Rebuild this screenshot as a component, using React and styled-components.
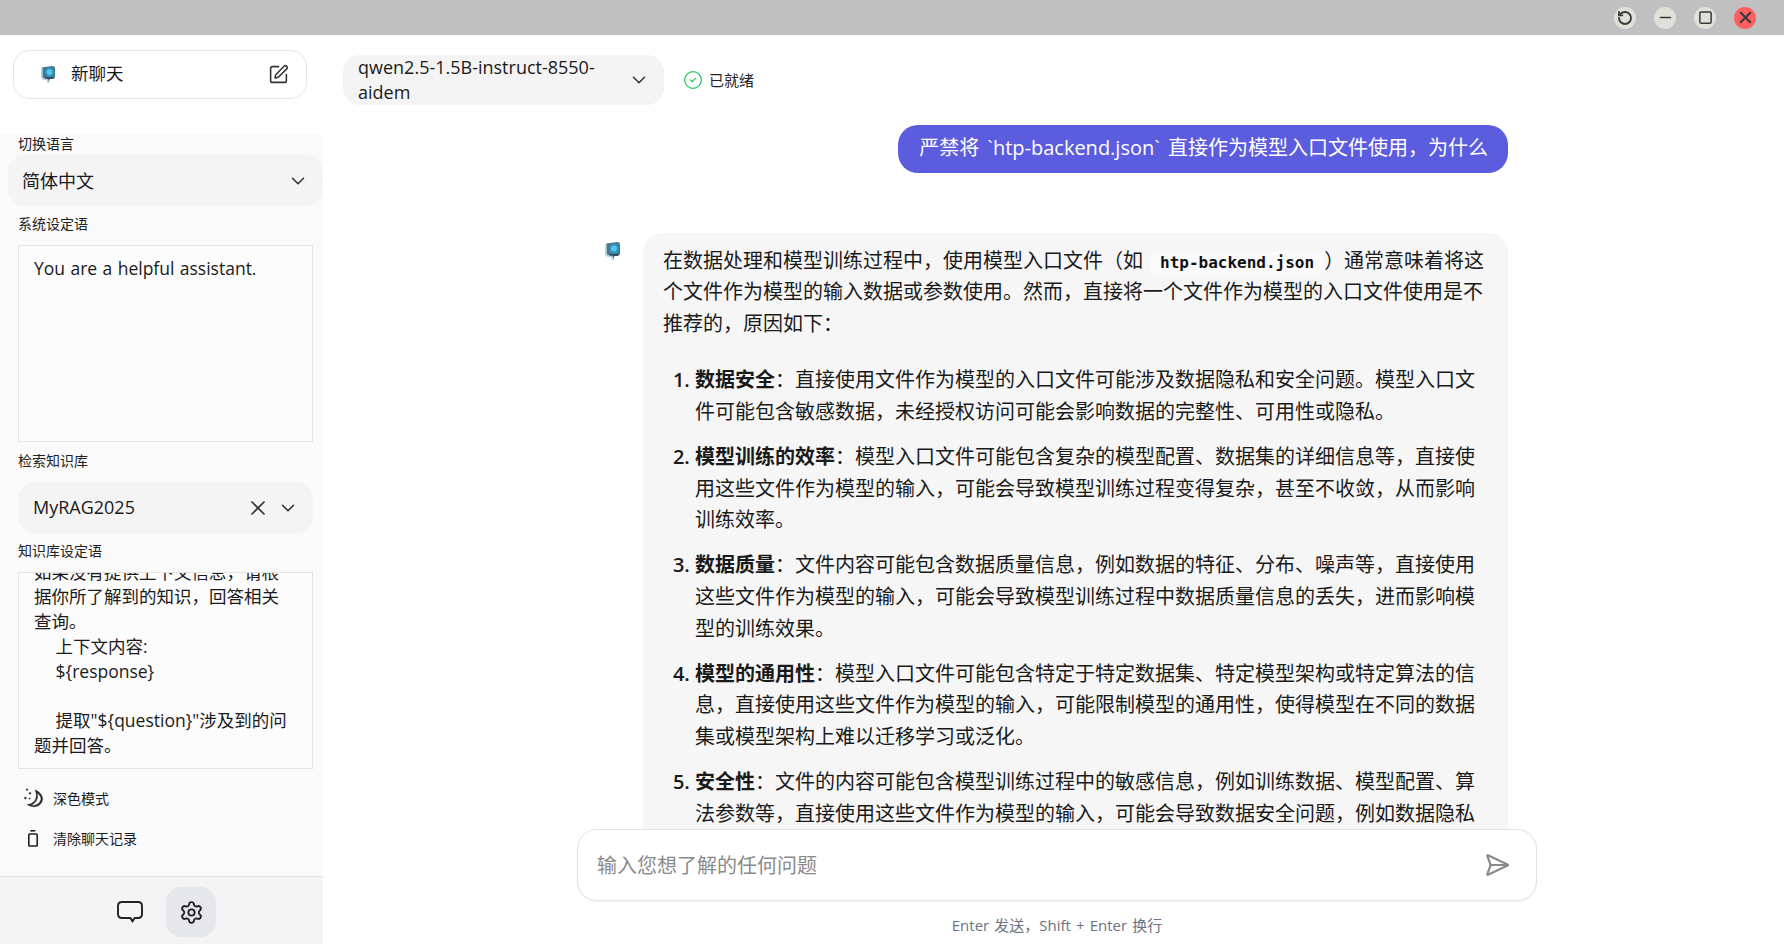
import React from "react";
import styled, { createGlobalStyle } from "styled-components";
import {
  ChevronDown,
  CircleCheck,
  Minus,
  RotateCcw,
  SendHorizontal,
  Settings,
  Square,
  SquarePen,
  X,
} from "lucide-react";

const FONT = `"Open Sans", "Noto Sans CJK SC", "Noto Sans", sans-serif`;

const GlobalStyle = createGlobalStyle`
  * { box-sizing: border-box; }
  html, body { margin: 0; padding: 0; height: 100%; overflow: hidden; background: #fff; }
  body { font-family: ${FONT}; color: #111; }
`;

const Page = styled.div`
  height: 100vh;
  display: flex;
  flex-direction: column;
`;

const TitleBar = styled.div`
  height: 35px;
  flex: none;
  background: #c0c0c0;
  display: flex;
  justify-content: flex-end;
  align-items: center;
  gap: 18px;
  padding: 0 28px 0 0;
`;

const WinButton = styled.div`
  width: 22px;
  height: 22px;
  border-radius: 50%;
  background: ${(p) => (p.$close ? "#ff5f5f" : "#dfe0da")};
  color: #3a3a3a;
  display: flex;
  align-items: center;
  justify-content: center;
`;

const Body = styled.div`
  flex: 1;
  min-height: 0;
  display: flex;
`;

const Sidebar = styled.aside`
  width: 323px;
  flex: none;
  background: #fafafa;
  display: flex;
  flex-direction: column;
`;

const SideTop = styled.div`
  height: 100px;
  flex: none;
  background: #fff;
  padding: 15px 16px 0 13px;
`;

const NewChat = styled.div`
  height: 49px;
  border: 1px solid #e5e5e5;
  border-radius: 16px;
  background: #fff;
  display: flex;
  align-items: center;
  padding: 0 17px 0 27px;
  font-size: 17.5px;
  color: #1a1a1a;
`;

const NewChatLabel = styled.span`
  flex: 1;
  margin-left: 15px;
  line-height: 1;
  position: relative;
  top: -1px;
`;

const SettingsPanel = styled.div`
  flex: 1;
  padding: 0 10px 0 18px;
  display: flex;
  flex-direction: column;
`;

const Label = styled.div`
  height: 20px;
  line-height: 18px;
  font-size: 14px;
  color: #222;
  margin-top: ${(p) => p.$top ?? 9}px;
`;

const Select = styled.div`
  height: 51px;
  flex: none;
  margin: ${(p) => (p.$wide ? "0 -10px 0 -10px" : "10px 0 0 0")};
  border-radius: 17px;
  background: #f4f4f4;
  display: flex;
  align-items: center;
  gap: 7px;
  padding: ${(p) => (p.$wide ? "0 14px 0 14px" : "0 14px 0 15px")};
  font-size: 18px;
  color: #1a1a1a;
`;

const SelectText = styled.span`
  flex: 1;
  padding-bottom: 2px;
`;

const TextBox = styled.div`
  height: 197px;
  flex: none;
  margin-top: 10px;
  border: 1px solid #e3e3e3;
  background: #fcfcfc;
  padding: 10px 25px 10px 15px;
  font-size: 17.5px;
  line-height: 24.8px;
  word-spacing: 0.85px;
  color: #1a1a1a;
  white-space: pre-wrap;
  overflow: hidden;
  display: flex;
  flex-direction: column;
  justify-content: ${(p) => (p.$bottom ? "flex-end" : "flex-start")};
`;

const Actions = styled.div`
  margin-top: 9px;
`;

const ActionRow = styled.div`
  height: 40px;
  display: flex;
  align-items: center;
  font-size: 14px;
  color: #1a1a1a;
  padding-left: 5px;
`;

const ActionIcon = styled.span`
  width: 30px;
  display: flex;
  align-items: center;
`;

const SideFooter = styled.div`
  height: 68px;
  flex: none;
  border-top: 1px solid #e2e2e2;
  background: #f4f4f4;
  display: flex;
  justify-content: center;
  align-items: center;
  gap: 11px;
  padding: 3px 2px 0 0;
  color: #222;
`;

const FooterButton = styled.div`
  width: 50px;
  height: 50px;
  border-radius: 15px;
  background: ${(p) => (p.$active ? "#e5e7eb" : "transparent")};
  display: flex;
  align-items: center;
  justify-content: center;
`;

const Main = styled.main`
  flex: 1;
  min-width: 0;
  display: flex;
  flex-direction: column;
  background: #fff;
`;

const ModelBar = styled.div`
  height: 90px;
  flex: none;
  padding: 20px 0 0 20px;
  display: flex;
  align-items: flex-start;
`;

const ModelSelect = styled.div`
  width: 321px;
  height: 50px;
  border-radius: 17px;
  background: #f4f4f4;
  display: flex;
  align-items: center;
  padding: 0 14px 0 15px;
  font-size: 18px;
  line-height: 25px;
  color: #1a1a1a;
`;

const ModelName = styled.span`
  flex: 1;
  padding-right: 16px;
`;

const Status = styled.div`
  height: 50px;
  margin-left: 19px;
  display: flex;
  align-items: center;
  gap: 6px;
  font-size: 15px;
  color: #222;
`;

const StatusText = styled.span`
  padding-bottom: 2px;
`;

const ChatArea = styled.div`
  height: 704px;
  flex: none;
  overflow: hidden;
  padding: 0 276px 0 282px;
  display: flex;
  flex-direction: column;
`;

const UserRow = styled.div`
  display: flex;
  justify-content: flex-end;
  margin-bottom: 60px;
`;

const UserBubble = styled.div`
  height: 48px;
  border-radius: 20px;
  background: #5c5cdf;
  color: #fff;
  font-size: 20px;
  line-height: 46px;
  word-spacing: 3px;
  padding: 0 20px 0 21px;
  white-space: nowrap;
`;

const AssistantRow = styled.div`
  display: flex;
  align-items: flex-start;
`;

const AvatarSlot = styled.div`
  width: 38px;
  flex: none;
  padding-top: 8px;
`;

const AssistantBubble = styled.div`
  width: 865px;
  flex: none;
  border-radius: 20px 20px 0 0;
  background: #f6f6f6;
  padding: 12px 20px 16px;
  font-size: 20px;
  line-height: 31.8px;
  color: #1a1a1a;
`;

const Para = styled.p`
  margin: 0 0 25px;
  line-height: 31.4px;
`;

const Code = styled.code`
  display: inline-block;
  height: 25px;
  line-height: 24px;
  margin: 0 0 0 6px;
  padding: 0 10px 0 11px;
  border-radius: 6px;
  background: #fafafa;
  font-family: "DejaVu Sans Mono", monospace;
  font-weight: 700;
  font-size: 16px;
  color: #111;
`;

const List = styled.ol`
  margin: 0;
  padding-left: 32px;
`;

const Item = styled.li`
  margin-bottom: 13px;
  &::marker {
    font-weight: 600;
  }
`;

const Composer = styled.div`
  flex: 1;
  min-height: 0;
  padding: 0 247px 0 254px;
`;

const InputBox = styled.div`
  height: 72px;
  border: 1px solid #e2e2e2;
  border-radius: 20px;
  background: #fff;
  box-shadow: 0 1px 2px rgba(0, 0, 0, 0.05);
  display: flex;
  align-items: center;
  justify-content: space-between;
  padding: 0 26px 0 19px;
  font-size: 20px;
  color: #8a8a8a;
`;

const Placeholder = styled.span`
  padding-bottom: 2px;
`;

const Hint = styled.div`
  margin-top: 14px;
  text-align: center;
  font-size: 15px;
  line-height: 20px;
  word-spacing: 1.2px;
  color: #6b7280;
`;

function Logo({ size = 16 }) {
  return (
    <svg width={size} height={size * 1.25} viewBox="0 0 16 20">
      <path d="M2 2.5 L12 1 Q15 1 15 4 V12 Q15 15 12 15 H9.5 L8 19 L6.5 15 H4 Q1 15 1 12 V4 Q1 2.5 2 2.5Z" fill="#4f6f82" />
      <path d="M1 3.5 V12 Q1 15 4 15 H6.5 L8 19" stroke="#a9d0e0" strokeWidth="1.8" fill="none" />
      <circle cx="9" cy="7.6" r="5.4" fill="#2c93bd" />
      <circle cx="9" cy="7.6" r="3" fill="#59c4e4" />
      <path d="M4.5 14 H13" stroke="#22343f" strokeWidth="1.2" />
    </svg>
  );
}

function MoonIcon() {
  return (
    <svg width="20" height="20" viewBox="0 0 20 20" fill="#222" stroke="#222" strokeWidth="0.5">
      <path d="M12.3 2 C17 4 20 8 19.5 11.5 C19 16 15 18.8 11 18.7 C8.5 18.6 6 18 4.3 16.5 C10 16.5 16 11 12.3 2Z M13.9 4.7 C16.3 10 12.3 15.9 7.6 17.2 C11.6 18.3 16.6 16.3 18 11.4 C18.3 9 16.6 6.4 13.9 4.7Z" fillRule="evenodd" />
      <circle cx="2.4" cy="10" r="0.9" />
      <circle cx="7" cy="5.3" r="0.9" />
      <circle cx="4" cy="1.6" r="0.8" />
      <circle cx="6.6" cy="10.6" r="0.6" />
    </svg>
  );
}

function TrashIcon() {
  return (
    <svg width="20" height="20" viewBox="0 0 20 20" fill="none" stroke="#222" strokeWidth="1.6">
      <path d="M7.3 2.8 H12.3" />
      <rect x="5.8" y="6" width="8.4" height="12" rx="0.8" />
    </svg>
  );
}

function ChatIcon() {
  return (
    <svg width="28" height="26" viewBox="0 0 28 26" fill="none" stroke="#222" strokeWidth="1.9" strokeLinejoin="round">
      <path d="M6 3 H22 Q26 3 26 7 V15 Q26 19 22 19 H18.5 L16.5 22.5 L14.5 19 H6 Q2 19 2 15 V7 Q2 3 6 3Z" />
    </svg>
  );
}

const KB_PROMPT = `如果没有提供上下文信息，请根据你所了解到的知识，回答相关查询。
    上下文内容:
    \${response}

    提取"\${question}"涉及到的问题并回答。`;

export default function App() {
  return (
    <Page>
      <GlobalStyle />
      <TitleBar>
        <WinButton><RotateCcw size={16} strokeWidth={2.8} /></WinButton>
        <WinButton><Minus size={17} strokeWidth={2.4} /></WinButton>
        <WinButton><Square size={15} strokeWidth={2.4} /></WinButton>
        <WinButton $close><X size={19} strokeWidth={2.6} /></WinButton>
      </TitleBar>
      <Body>
        <Sidebar>
          <SideTop>
            <NewChat>
              <Logo size={15} />
              <NewChatLabel>新聊天</NewChatLabel>
              <SquarePen size={21} strokeWidth={1.8} color="#333" />
            </NewChat>
          </SideTop>
          <SettingsPanel>
            <Label $top={0}>切换语言</Label>
            <Select $wide>
              <SelectText>简体中文</SelectText>
              <ChevronDown size={22} strokeWidth={1.7} color="#333" />
            </Select>
            <Label>系统设定语</Label>
            <TextBox>You are a helpful assistant.</TextBox>
            <Label $top={10}>检索知识库</Label>
            <Select>
              <SelectText>MyRAG2025</SelectText>
              <X size={24} strokeWidth={1.7} color="#333" />
              <ChevronDown size={22} strokeWidth={1.7} color="#333" />
            </Select>
            <Label>知识库设定语</Label>
            <TextBox $bottom><div>{KB_PROMPT}</div></TextBox>
            <Actions>
              <ActionRow>
                <ActionIcon><MoonIcon /></ActionIcon>
                深色模式
              </ActionRow>
              <ActionRow>
                <ActionIcon><TrashIcon /></ActionIcon>
                清除聊天记录
              </ActionRow>
            </Actions>
          </SettingsPanel>
          <SideFooter>
            <FooterButton><ChatIcon /></FooterButton>
            <FooterButton $active><Settings size={25} strokeWidth={1.8} /></FooterButton>
          </SideFooter>
        </Sidebar>
        <Main>
          <ModelBar>
            <ModelSelect>
              <ModelName>qwen2.5-1.5B-instruct-8550-aidem</ModelName>
              <ChevronDown size={22} strokeWidth={1.7} color="#333" />
            </ModelSelect>
            <Status>
              <CircleCheck size={20} strokeWidth={1.5} color="#22c55e" />
              <StatusText>已就绪</StatusText>
            </Status>
          </ModelBar>
          <ChatArea>
            <UserRow>
              <UserBubble>严禁将 `htp-backend.json` 直接作为模型入口文件使用，为什么</UserBubble>
            </UserRow>
            <AssistantRow>
              <AvatarSlot><Logo size={16} /></AvatarSlot>
              <AssistantBubble>
                <Para>
                  在数据处理和模型训练过程中，使用模型入口文件（如<Code>htp-backend.json</Code>）通常意味着将这个文件作为模型的输入数据或参数使用。然而，直接将一个文件作为模型的入口文件使用是不推荐的，原因如下：
                </Para>
                <List>
                  <Item><strong>数据安全</strong>：直接使用文件作为模型的入口文件可能涉及数据隐私和安全问题。模型入口文件可能包含敏感数据，未经授权访问可能会影响数据的完整性、可用性或隐私。</Item>
                  <Item><strong>模型训练的效率</strong>：模型入口文件可能包含复杂的模型配置、数据集的详细信息等，直接使用这些文件作为模型的输入，可能会导致模型训练过程变得复杂，甚至不收敛，从而影响训练效率。</Item>
                  <Item><strong>数据质量</strong>：文件内容可能包含数据质量信息，例如数据的特征、分布、噪声等，直接使用这些文件作为模型的输入，可能会导致模型训练过程中数据质量信息的丢失，进而影响模型的训练效果。</Item>
                  <Item><strong>模型的通用性</strong>：模型入口文件可能包含特定于特定数据集、特定模型架构或特定算法的信息，直接使用这些文件作为模型的输入，可能限制模型的通用性，使得模型在不同的数据集或模型架构上难以迁移学习或泛化。</Item>
                  <Item><strong>安全性</strong>：文件的内容可能包含模型训练过程中的敏感信息，例如训练数据、模型配置、算法参数等，直接使用这些文件作为模型的输入，可能会导致数据安全问题，例如数据隐私泄露或模型被攻击。</Item>
                </List>
              </AssistantBubble>
            </AssistantRow>
          </ChatArea>
          <Composer>
            <InputBox>
              <Placeholder>输入您想了解的任何问题</Placeholder>
              <SendHorizontal size={26} strokeWidth={2} color="#8a8a8a" />
            </InputBox>
            <Hint>Enter 发送，Shift + Enter 换行</Hint>
          </Composer>
        </Main>
      </Body>
    </Page>
  );
}
